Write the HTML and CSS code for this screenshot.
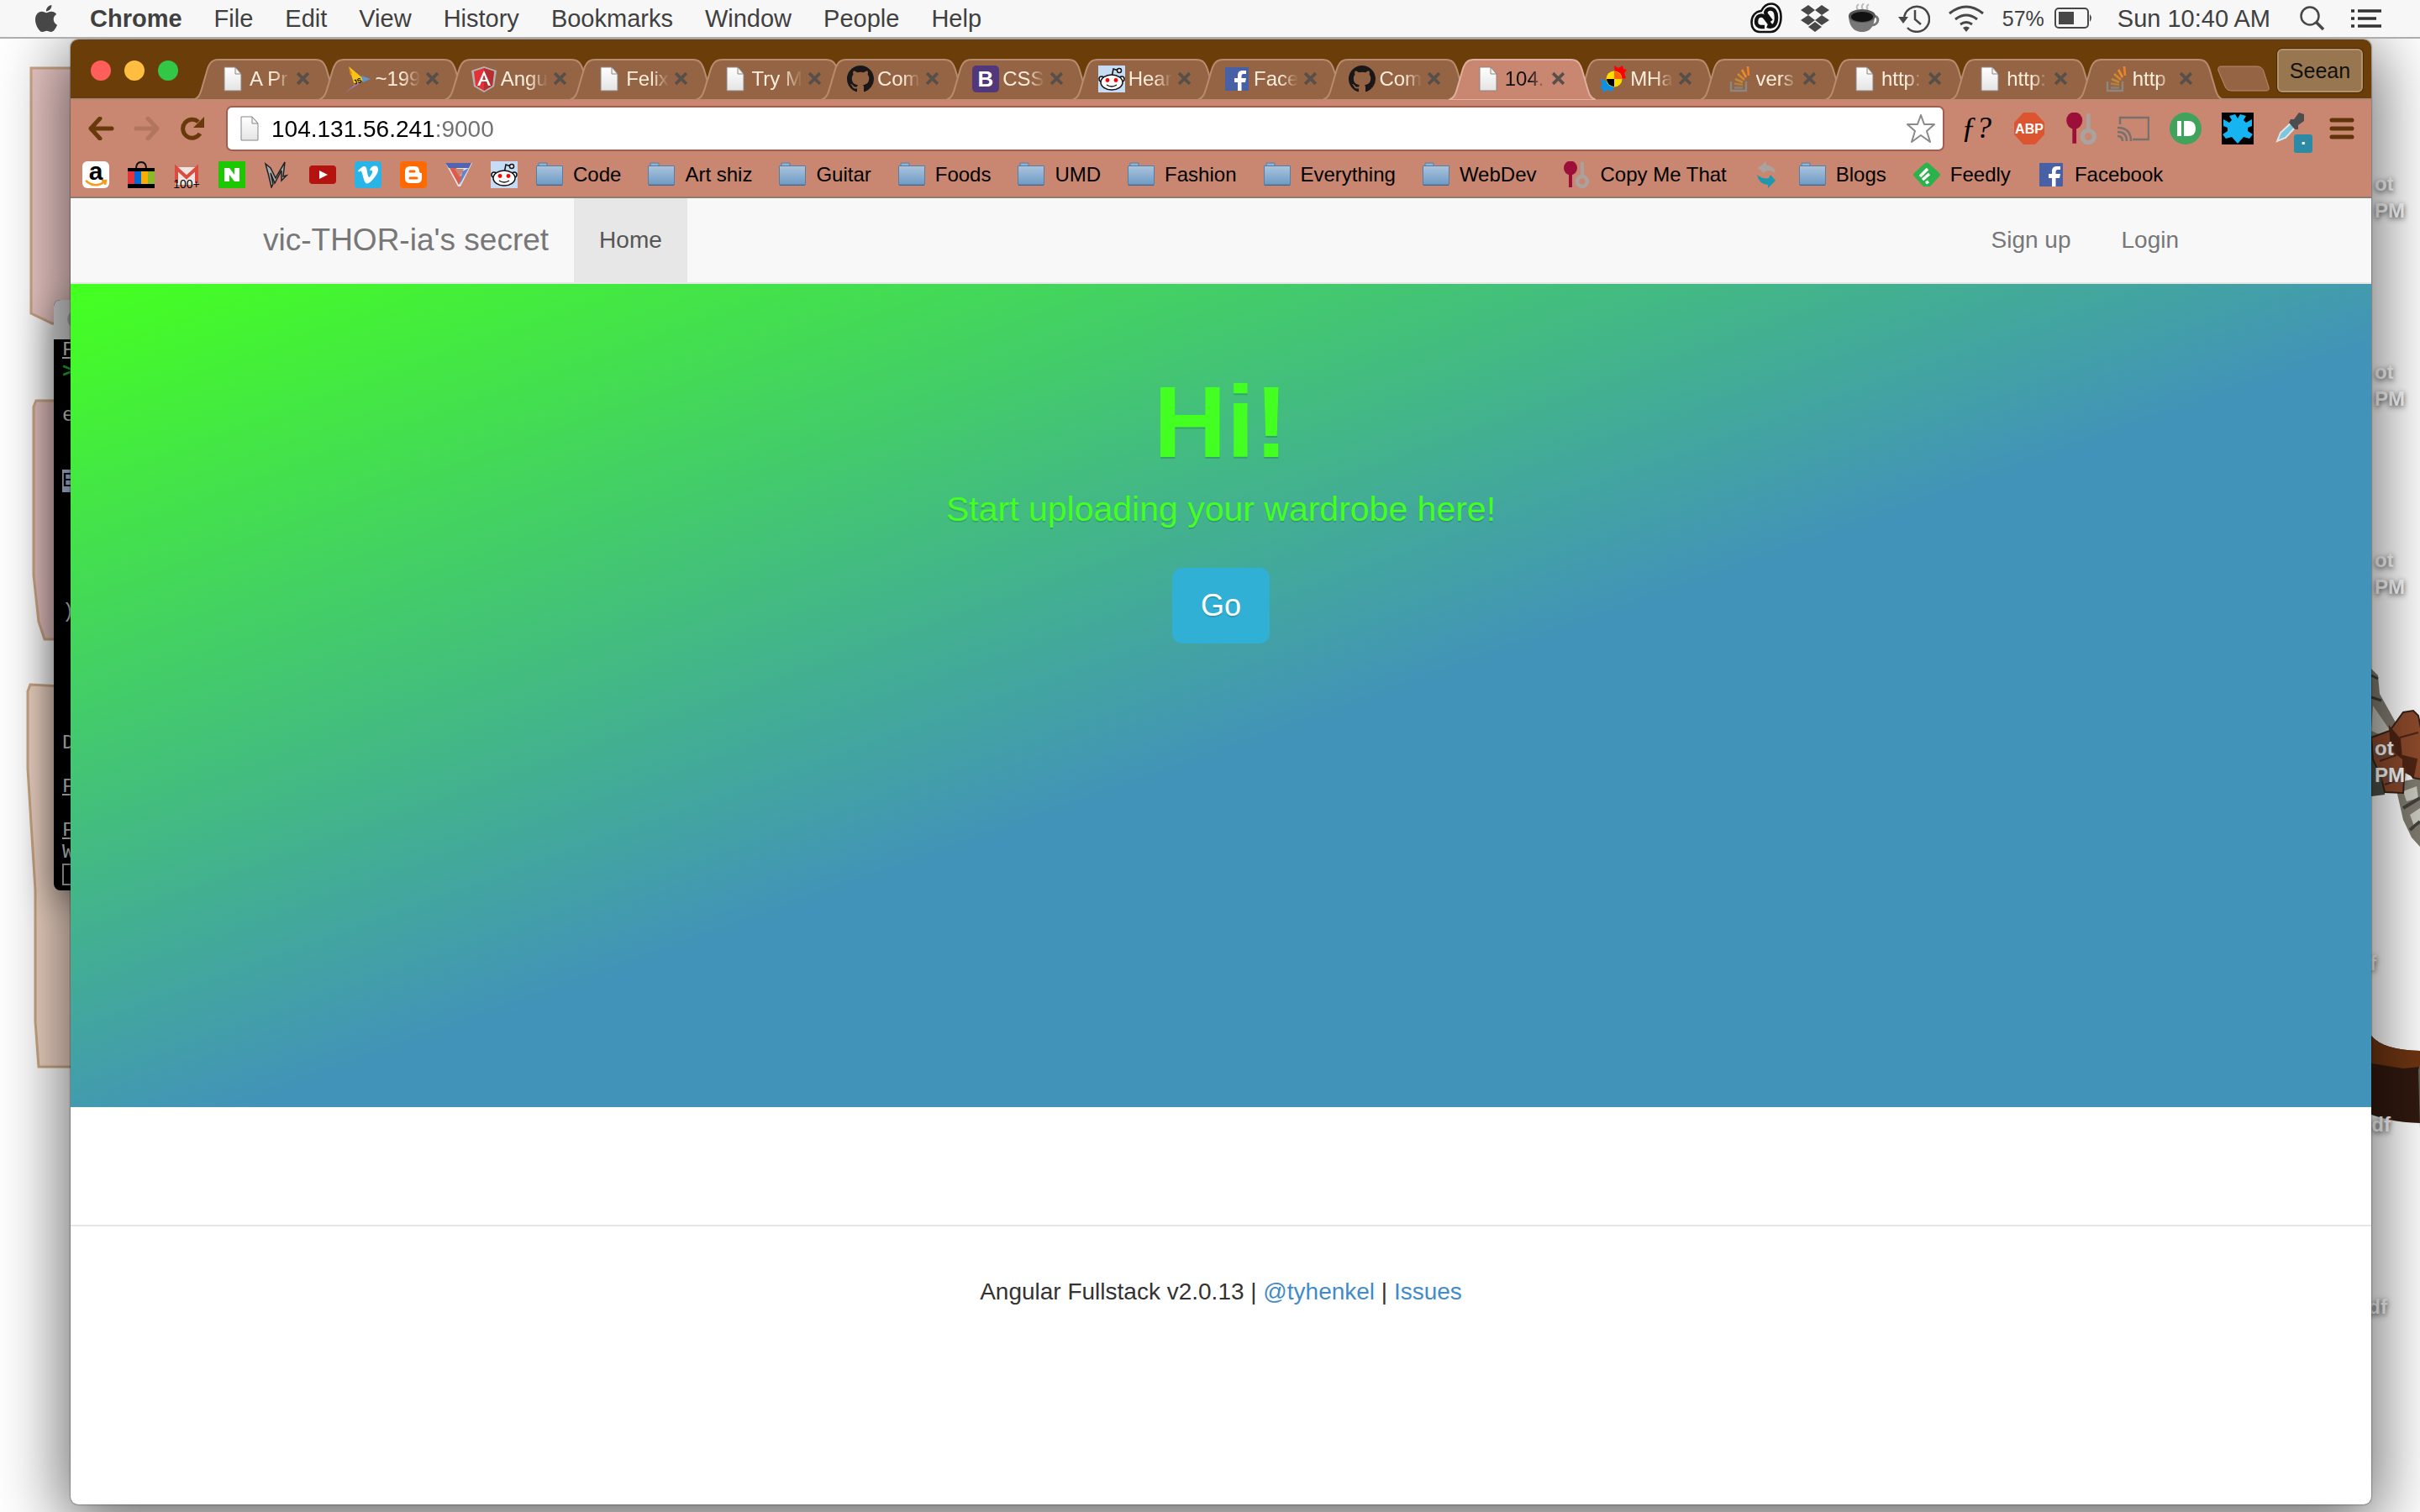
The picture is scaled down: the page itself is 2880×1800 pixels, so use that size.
FILE: index.html
```html
<!DOCTYPE html>
<html lang="en">
    <head>
        <meta charset="utf-8">
        <title>vic-THOR-ia's secret</title>
        <link rel="stylesheet" href="styles.css">
    </head>
    <body>
        <svg class="sprites" width="0" height="0">
            <defs>
                <linearGradient id="paper" x1="0" y1="0" x2="0" y2="1"><stop offset="0" stop-color="#fff"/><stop offset="1" stop-color="#e4e4e4"/></linearGradient>
                <linearGradient id="folder-blue" x1="0" y1="0" x2="0" y2="1"><stop offset="0" stop-color="#abc4dd"/><stop offset="1" stop-color="#6d9ac4"/></linearGradient>
            </defs>
            <symbol id="tab-shape" viewBox="0 0 176 49" preserveAspectRatio="none">
                <path d="M0 49C6 47 8 43 10 36L17 12C20 4 23 1 30 1H146C153 1 156 4 159 12L166 36C168 43 170 47 176 49Z"/>
            </symbol>
            <symbol id="doc" viewBox="0 0 32 32">
                <path d="M6 2H19L26 10V30H6Z" fill="url(#paper)" stroke="#8d8580"/><path d="M19 2V10H26Z" fill="#f4f4f4" stroke="#8d8580"/>
            </symbol>
            <symbol id="close" viewBox="0 0 16 16"><path d="M2 2L14 14M14 2L2 14" stroke="#57504a" stroke-width="3.4"/></symbol>
            <symbol id="bird" viewBox="0 0 32 32">
                <path d="M5 1L24 17L12 24Z" fill="#f7c516"/><path d="M5 1L9 9L7 12Z" fill="#e88b17"/><path d="M20 12L31 16L22 20Z" fill="#5f93d2"/><path d="M12 23L22 19L1 32Z" fill="#9a7bc0"/>
                <text x="11" y="22" class="tiny-js" transform="rotate(-20 14 20)">JS</text>
            </symbol>
            <symbol id="angular" viewBox="0 0 32 32">
                <path d="M16 1L31 6L28 25L16 32L4 25L1 6Z" fill="#b3b3b3"/><path d="M16 3L28 7L26 24L16 30L6 24L4 7Z" fill="#e23237"/><path d="M16 3L28 7L26 24L16 30Z" fill="#b52e31"/>
                <path d="M16 6L24 24H21L19 19H13L11 24H8ZM16 11L14 17H18Z" fill="#fff" fill-rule="evenodd"/>
            </symbol>
            <symbol id="github" viewBox="0 0 16 16">
                <path fill="#191717" d="M8 0C3.58 0 0 3.58 0 8c0 3.54 2.29 6.53 5.47 7.59.4.07.55-.17.55-.38 0-.19-.01-.82-.01-1.49-2.01.37-2.53-.49-2.69-.94-.09-.23-.48-.94-.82-1.13-.28-.15-.68-.52-.01-.53.63-.01 1.08.58 1.23.82.72 1.21 1.87.87 2.33.66.07-.52.28-.87.51-1.07-1.78-.2-3.64-.89-3.64-3.95 0-.87.31-1.59.82-2.15-.08-.2-.36-1.02.08-2.12 0 0 .67-.21 2.2.82.64-.18 1.32-.27 2-.27.68 0 1.36.09 2 .27 1.53-1.04 2.2-.82 2.2-.82.44 1.1.16 1.92.08 2.12.51.56.82 1.27.82 2.15 0 3.07-1.87 3.75-3.65 3.95.29.25.54.73.54 1.48 0 1.07-.01 1.93-.01 2.2 0 .21.15.46.55.38A8.013 8.013 0 0016 8c0-4.42-3.58-8-8-8z"/>
            </symbol>
            <symbol id="bootstrap" viewBox="0 0 32 32"><rect width="32" height="32" rx="5" fill="#51377b"/><text x="16" y="25" class="letter-b">B</text></symbol>
            <symbol id="reddit" viewBox="0 0 32 32">
                <rect width="32" height="32" fill="#c5dcf4"/><path d="M16 14L18 4L24 6" fill="none" stroke="#111" stroke-width="1.5"/>
                <g fill="#fff" stroke="#111" stroke-width="1.5"><circle cx="25" cy="6" r="2.5"/><circle cx="4" cy="16" r="3"/><circle cx="28" cy="16" r="3"/><ellipse cx="16" cy="20" rx="13" ry="9"/></g>
                <circle cx="11" cy="17.500" r="2.400" fill="#f00"/><circle cx="21" cy="17.500" r="2.400" fill="#f00"/><path d="M10 23Q16 27 22 23" fill="none" stroke="#111" stroke-width="1.500"/>
            </symbol>
            <symbol id="facebook" viewBox="0 0 32 32"><rect x="2" y="2" width="28" height="28" rx="1" fill="#4860a5"/><path d="M17 30V20H13V15H17V12C17 8 19 6 23 6H27V10H24C22 10 21.500 11 21.500 13V15H27L26 20H21.500V30Z" fill="#fff"/></symbol>
            <symbol id="mha" viewBox="0 0 32 32">
                <path d="M17 0L22 3L27 0L28 4L32 5L29 9L31 15L25 16L18 12Z" fill="#f00"/><path d="M0 16L6 18L14 22L17 27L14 31L9 29L4 32L3 27L0 27L3 22Z" fill="#0b92e6"/>
                <circle cx="17" cy="16" r="9.500" fill="#fd0"/><path d="M17 7A9 9 0 0 1 26 16H17Z" fill="#f60"/><path d="M8 16H17V25A9 9 0 0 1 8 16Z" fill="#000"/>
            </symbol>
            <symbol id="overflow" viewBox="0 0 32 32">
                <path d="M6 19V30H24V19" fill="none" stroke="#8a8784" stroke-width="2.400"/><path d="M10 26.500H20" stroke="#8a8078" stroke-width="2.600"/><path d="M10 21.500L20 23" stroke="#b0803f" stroke-width="2.600"/><path d="M11 16L20 20" stroke="#bd8a3c" stroke-width="2.600"/><path d="M14 10L22 17" stroke="#d48a2c" stroke-width="2.600"/><path d="M19 5L24 14" stroke="#ef8a25" stroke-width="2.600"/><path d="M26 1L27 12" stroke="#f48024" stroke-width="2.600"/>
            </symbol>
            <symbol id="folder" viewBox="0 0 32 32"><path d="M3 6V2H13V6" fill="#92b1cf" stroke="#557ea5"/><path d="M0.500 5.500H31.500V28H0.500Z" fill="url(#folder-blue)" stroke="#557ea5"/><path d="M1 28.500H31" stroke="#41688e" stroke-width="1"/></symbol>
            <symbol id="spoons" viewBox="0 0 32 32"><ellipse cx="9" cy="8" rx="8" ry="8.500" fill="#9b0f38"/><path d="M9 12V31" stroke="#9b0f38" stroke-width="4"/><path d="M23 1V18" stroke="#aaa19c" stroke-width="4"/><ellipse cx="23" cy="24" rx="6" ry="6" fill="none" stroke="#a9a29e" stroke-width="4.500"/></symbol>
        </svg>

        <header class="menubar">
            <button class="apple" aria-label="Apple menu"><svg width="28" height="32" viewBox="2 0 20 24" fill="#474747"><path d="M12.152 6.896c-.948 0-2.415-1.078-3.96-1.04-2.04.027-3.91 1.183-4.961 3.014-2.117 3.675-.546 9.103 1.519 12.09 1.013 1.454 2.208 3.09 3.792 3.039 1.52-.065 2.09-.987 3.935-.987 1.831 0 2.35.987 3.96.948 1.637-.026 2.676-1.48 3.676-2.948 1.156-1.688 1.636-3.325 1.662-3.415-.039-.013-3.182-1.221-3.22-4.857-.026-3.04 2.48-4.494 2.597-4.559-1.429-2.09-3.623-2.324-4.39-2.376-2-.156-3.675 1.09-4.61 1.09zM15.53 3.83c.843-1.012 1.4-2.427 1.245-3.83-1.207.052-2.662.805-3.532 1.818-.78.896-1.454 2.338-1.273 3.714 1.338.104 2.715-.688 3.559-1.701"/></svg></button>
            <button class="app-name">Chrome</button>
            <button>File</button>
            <button>Edit</button>
            <button>View</button>
            <button>History</button>
            <button>Bookmarks</button>
            <button>Window</button>
            <button>People</button>
            <button>Help</button>
            <div class="status">
                <svg width="38" height="38" viewBox="0 0 38 38" fill="none" stroke="#111"><path d="M11 35C5 35 1.500 30 1.500 24C1.500 16 6 11 13 10C16 4 20 1.500 25 1.500C32 1.500 36.500 8 36.500 17C36.500 27 32 35 24 35Z" stroke-width="2.600"/><path d="M17 29H13C9 29 7 26 7 23C7 18 10 15.500 13 15.500C16 15.500 17 17 19 20L25 28" stroke-width="4.500"/><path d="M20 28C28 31 31 25 31 18C31 11 28 7.500 24 7.500C20 7.500 17 11 19 14L25 22" stroke-width="4.500"/></svg>
                <svg width="34" height="32" viewBox="0 0 34 32" fill="#474747"><path d="M9 0L17 6L9 12L0 6ZM25 0L34 6L25 12L17 6ZM9 12L17 18L9 24L0 18ZM25 12L34 18L25 24L17 18ZM17 20L25 26L17 32L9 26Z"/></svg>
                <svg width="38" height="36" viewBox="0 0 38 36"><path d="M12 7Q9 4 13 1M18 7Q15 4 19 0M24 7Q21 4 25 1" fill="none" stroke="#bbb" stroke-width="2"/><path d="M30 15C38 14 38 26 28 26" fill="none" stroke="#777" stroke-width="3"/><path d="M1 14C1 24 5 34 17 34S32 24 32 14Z" fill="#777"/><ellipse cx="17" cy="15" rx="16" ry="8" fill="#555"/><ellipse cx="17" cy="16" rx="13" ry="6" fill="#111"/></svg>
                <svg width="38" height="34" viewBox="0 0 38 34" fill="none" stroke="#474747" stroke-width="2.500"><path d="M7 17A15 15 0 1 1 11 28"/><path d="M0 15H12L6 23Z" fill="#474747" stroke="none"/><path d="M20 7V18L27 24"/></svg>
                <svg width="42" height="32" viewBox="0 0 42 32" fill="none" stroke="#474747" stroke-width="3"><path d="M1 10Q21-6 41 10M8 17Q21 7 34 17M14 23Q21 18 28 23"/><path d="M17 27Q21 24 25 27L21 32Z" fill="#474747" stroke="none"/></svg>
                <span class="battery">57% <svg width="46" height="26" viewBox="0 0 46 26"><rect x="1" y="1" width="39" height="23" rx="4" fill="none" stroke="#474747" stroke-width="2"/><rect x="5" y="5" width="18" height="15" fill="#474747"/><path d="M42 8Q46 12 42 17Z" fill="#474747"/></svg></span>
                <time class="clock">Sun 10:40 AM</time>
                <svg class="search" width="30" height="30" viewBox="0 0 30 30" fill="none" stroke="#474747"><circle cx="12" cy="12" r="10.500" stroke-width="2.500"/><path d="M19 19L28 28" stroke-width="3.500"/></svg>
                <svg class="list" width="36" height="22" viewBox="0 0 36 22" stroke="#333" stroke-width="3.500"><path d="M0 2H4M8 2H36M0 11H4M8 11H30M0 20H4M8 20H36"/></svg>
            </div>
        </header>

        <div class="desktop">
            <!-- wallpaper, left and right edges -->
            <svg class="art-left" width="90" height="1300" viewBox="0 0 90 1300" stroke="#cda886" stroke-width="3">
                <path d="M37 35H90V343L62 339L37 327Z" fill="#ebc9c6"/>
                <path d="M43 431H90V715H53L46 694L40 639V438Z" fill="#e6c3c2"/>
                <path d="M36 769L90 772V1224H46L42 1170V1014L33 869V777Z" fill="#efd5c5"/>
            </svg>
            <svg class="art-right" width="70" height="700" viewBox="0 0 70 700">
                <path d="M10 0L20 10L22 32L50 82L40 120L10 110Z" fill="#817c70"/>
                <path d="M12 10L20 14M12 36L24 40" stroke="#3f3d38" stroke-width="3"/>
                <path d="M14 46L36 78L30 84L12 76Z" fill="#c3c4ba"/>
                <path d="M0 90L28 110L28 152L12 154L0 152Z" fill="#4b5145"/>
                <path d="M40 138L70 132V214L60 203L50 182Z" fill="#817c70"/><path d="M50 148L66 142L68 156L54 160ZM58 176L70 168V186L64 192Z" fill="#cccbc0"/>
                <path d="M50 168L70 156M58 194L70 184" stroke="#44423c" stroke-width="4"/>
                <path d="M12 84L34 76L50 54L62 52L68 58L72 78V134L62 132L52 118L50 150L28 149L24 132L14 110Z" fill="#8f4b2c" stroke="#35221a" stroke-width="2"/>
                <path d="M34 72L46 86L48 108L36 98ZM50 106L66 110L62 130L50 124ZM46 84L68 78M22 112L42 105M28 140L46 134" fill="#502514" stroke="#502514" stroke-width="2"/>
                <path d="M0 426L12 439Q26 456 70 457V543Q30 542 0 528Z" fill="#31190f"/><path d="M0 426L12 439Q26 456 70 457V476L50 478L0 470Z" fill="#6e3512"/><path d="M68 480L70 474V550Z" fill="#62685a"/>
            </svg>
            <div class="labels">
                <p class="label l1">ot<br>PM</p>
                <p class="label l2">ot<br>PM</p>
                <p class="label l3">ot<br>PM</p>
                <p class="label l4">ot<br>PM</p>
                <p class="label l5">f</p>
                <p class="label l6">df</p>
                <p class="label l7">df</p>
            </div>
            <div class="terminal">
                <div class="terminal-bar"><i></i></div>
<pre><u>F</u>
<b>&gt;</b>

e


<mark>E</mark>





)





D

<u>F</u>

<u>F</u>
W
<span class="cursor"></span></pre>
            </div>

            <div class="window">
                <div class="titlebar">
                    <div class="lights"><button class="red" aria-label="Close window"></button><button class="yellow" aria-label="Minimize"></button><button class="green" aria-label="Zoom"></button></div>
                    <div class="tabs">
                        <div class="tab"><svg class="shape"><use href="#tab-shape"/></svg><div class="tab-in"><svg class="ico"><use href="#doc"/></svg><span>A Pr</span><button aria-label="Close tab"><svg><use href="#close"/></svg></button></div></div>
                        <div class="tab"><svg class="shape"><use href="#tab-shape"/></svg><div class="tab-in"><svg class="ico"><use href="#bird"/></svg><span>~199</span><button aria-label="Close tab"><svg><use href="#close"/></svg></button></div></div>
                        <div class="tab"><svg class="shape"><use href="#tab-shape"/></svg><div class="tab-in"><svg class="ico"><use href="#angular"/></svg><span>Angu</span><button aria-label="Close tab"><svg><use href="#close"/></svg></button></div></div>
                        <div class="tab"><svg class="shape"><use href="#tab-shape"/></svg><div class="tab-in"><svg class="ico"><use href="#doc"/></svg><span>Felix</span><button aria-label="Close tab"><svg><use href="#close"/></svg></button></div></div>
                        <div class="tab"><svg class="shape"><use href="#tab-shape"/></svg><div class="tab-in"><svg class="ico"><use href="#doc"/></svg><span>Try M</span><button aria-label="Close tab"><svg><use href="#close"/></svg></button></div></div>
                        <div class="tab"><svg class="shape"><use href="#tab-shape"/></svg><div class="tab-in"><svg class="ico"><use href="#github"/></svg><span>Com</span><button aria-label="Close tab"><svg><use href="#close"/></svg></button></div></div>
                        <div class="tab"><svg class="shape"><use href="#tab-shape"/></svg><div class="tab-in"><svg class="ico"><use href="#bootstrap"/></svg><span>CSS</span><button aria-label="Close tab"><svg><use href="#close"/></svg></button></div></div>
                        <div class="tab"><svg class="shape"><use href="#tab-shape"/></svg><div class="tab-in"><svg class="ico"><use href="#reddit"/></svg><span>Hear</span><button aria-label="Close tab"><svg><use href="#close"/></svg></button></div></div>
                        <div class="tab"><svg class="shape"><use href="#tab-shape"/></svg><div class="tab-in"><svg class="ico"><use href="#facebook"/></svg><span>Face</span><button aria-label="Close tab"><svg><use href="#close"/></svg></button></div></div>
                        <div class="tab"><svg class="shape"><use href="#tab-shape"/></svg><div class="tab-in"><svg class="ico"><use href="#github"/></svg><span>Com</span><button aria-label="Close tab"><svg><use href="#close"/></svg></button></div></div>
                        <div class="tab active"><svg class="shape"><use href="#tab-shape"/></svg><div class="tab-in"><svg class="ico"><use href="#doc"/></svg><span>104.</span><button aria-label="Close tab"><svg><use href="#close"/></svg></button></div></div>
                        <div class="tab"><svg class="shape"><use href="#tab-shape"/></svg><div class="tab-in"><svg class="ico"><use href="#mha"/></svg><span>MHa</span><button aria-label="Close tab"><svg><use href="#close"/></svg></button></div></div>
                        <div class="tab"><svg class="shape"><use href="#tab-shape"/></svg><div class="tab-in"><svg class="ico"><use href="#overflow"/></svg><span>vers</span><button aria-label="Close tab"><svg><use href="#close"/></svg></button></div></div>
                        <div class="tab"><svg class="shape"><use href="#tab-shape"/></svg><div class="tab-in"><svg class="ico"><use href="#doc"/></svg><span>http:</span><button aria-label="Close tab"><svg><use href="#close"/></svg></button></div></div>
                        <div class="tab"><svg class="shape"><use href="#tab-shape"/></svg><div class="tab-in"><svg class="ico"><use href="#doc"/></svg><span>http:</span><button aria-label="Close tab"><svg><use href="#close"/></svg></button></div></div>
                        <div class="tab"><svg class="shape"><use href="#tab-shape"/></svg><div class="tab-in"><svg class="ico"><use href="#overflow"/></svg><span>http</span><button aria-label="Close tab"><svg><use href="#close"/></svg></button></div></div>
                    </div>
                    <button class="new-tab" aria-label="New tab"><svg width="64" height="32" viewBox="0 0 64 32"><path d="M5 1H48Q54 1 56 7L62 26Q63 30 59 30H18Q12 30 10 25L2 6Q1 1 5 1Z" fill="#956444" stroke="#b98c6f"/></svg></button>
                    <button class="profile">Seean</button>
                </div>

                <div class="toolbar">
                    <button class="nav-btn" aria-label="Back"><svg width="32" height="28" viewBox="0 0 32 28" fill="none" stroke="#68390a" stroke-width="5"><path d="M29 14H5M15 2L4 14L15 26" stroke-linecap="round" stroke-linejoin="round"/></svg></button>
                    <button class="nav-btn" aria-label="Forward"><svg width="32" height="28" viewBox="0 0 32 28" fill="none" stroke="#b17560" stroke-width="5"><path d="M3 14H27M17 2L28 14L17 26" stroke-linecap="round" stroke-linejoin="round"/></svg></button>
                    <button class="nav-btn" aria-label="Reload"><svg width="32" height="28" viewBox="0 0 32 28" fill="none" stroke="#68390a" stroke-width="5"><path d="M24 20A11 11 0 1 1 22 6"/><path d="M29 0V13H16Z" fill="#68390a" stroke="none"/></svg></button>
                    <div class="omnibox">
                        <svg class="ico"><use href="#doc"/></svg>
                        <input type="text" aria-label="Address" value="104.131.56.241:9000">
                        <svg width="36" height="36" viewBox="0 0 36 36" fill="none" stroke="#8a8a8a" stroke-width="2" stroke-linejoin="round"><path d="M18 2L22 13H34L25 21L29 34L18 26L7 34L11 21L2 13H14Z"/></svg>
                    </div>
                    <div class="extensions">
                        <svg width="38" height="38" viewBox="0 0 38 38"><text x="18" y="30" class="letter-f">ƒ?</text></svg>
                        <svg width="38" height="38" viewBox="0 0 38 38"><path d="M12 0H26L37 12V26L26 38H12L1 26V12Z" fill="#dc5430"/><text x="19" y="25" class="letter-abp">ABP</text></svg>
                        <svg width="38" height="38"><use href="#spoons"/></svg>
                        <svg width="38" height="38" viewBox="0 0 38 38" fill="none" stroke="#77706c" stroke-width="2.500"><path d="M3 14V6H37V32H18"/><path d="M0 28Q6 28 6 34M0 23Q11 23 11 34M0 18Q16 18 16 34"/></svg>
                        <svg width="38" height="38" viewBox="0 0 38 38"><circle cx="19" cy="19" r="19" fill="#3fa35b"/><path d="M9 10H14V28H9ZM17 10H22Q31 10 31 19T22 28H17Z" fill="#fff"/></svg>
                        <svg width="38" height="38" viewBox="0 0 38 38"><path d="M0 0H38V38H0Z"/><path d="M19 7L22 2L29 4L26 9L29 12L36 8V16L31 18V22L37 26L33 31L26 29L19 37L12 29L5 31L1 26L7 22V18L2 16V8L9 12L12 9L9 4L16 2Z" fill="#16b4f0"/></svg>
                        <span class="dropper"><svg width="38" height="38" viewBox="0 0 38 38"><path d="M4 34L8 24L22 11L27 16L14 30Z" fill="#7cc7dd" stroke="#e0e5e6" stroke-width="2"/><path d="M20 8L24 8L30 0L36 2V10L29 15V20L25 20L18 12Z" fill="#4d4d4f"/></svg><i>▪</i></span>
                        <button class="menu-btn" aria-label="Menu"><svg width="30" height="28" viewBox="0 0 30 28" stroke="#5f3409" stroke-width="5" stroke-linecap="round"><path d="M3 4H27M3 14H27M3 24H27"/></svg></button>
                    </div>
                </div>

                <nav class="bookmarks">
                    <a href="#" aria-label="Amazon"><svg class="ico" viewBox="0 0 32 32"><rect width="32" height="32" rx="6" fill="#fff"/><text x="16" y="22" class="letter-a">a</text><path d="M4 23Q15 33 27 24M23 23H28L27 28" fill="none" stroke="#f79b1b" stroke-width="2.500"/></svg></a>
                    <a href="#" aria-label="Shop"><svg class="ico" viewBox="0 0 32 32"><path d="M10 9Q10 1 16 1T22 9" fill="none" stroke="#111" stroke-width="2"/><path d="M0 8H32V32H0Z"/><path d="M0 12H8V27H0Z" fill="#e5343c"/><path d="M8 12H16V27H8Z" fill="#0568d8"/><path d="M16 12H24V27H16Z" fill="#f9ae05"/><path d="M24 12H32V27H24Z" fill="#8ab92b"/></svg></a>
                    <a href="#" aria-label="Gmail"><svg class="ico" viewBox="0 0 32 32"><path d="M3 7H29V28H3Z" fill="#eee6e2"/><path d="M4 26V8L16 19L28 8V26" fill="none" stroke="#dc4b3e" stroke-width="4"/><text x="16" y="32" class="letter-100">100+</text></svg></a>
                    <a href="#" aria-label="N"><svg class="ico" viewBox="0 0 32 32"><rect width="32" height="32" rx="1" fill="#1ec800"/><path d="M7 24V8H13L19 16V8H25V24H19L13 16V24Z" fill="#fff"/></svg></a>
                    <a href="#" aria-label="M"><svg class="ico" viewBox="0 0 32 32"><path d="M2 3L8 8L14 20L25 1L23 18L27 17L21 23L21 11L13 26L8 14L11 27L9 31L6 18Z" fill="#aaa" stroke="#222" stroke-width="1.500"/></svg></a>
                    <a href="#" aria-label="YouTube"><svg class="ico" viewBox="0 0 32 32"><rect y="5" width="32" height="22" rx="4" fill="#b5130f"/><path d="M12 11L22 16L12 21Z" fill="#fff"/></svg></a>
                    <a href="#" aria-label="Vimeo"><svg class="ico" viewBox="0 0 32 32"><rect width="32" height="32" rx="4" fill="#28b4e6"/><path transform="translate(4 4)" fill="#fff" d="M23.977 6.416c-.105 2.338-1.739 5.543-4.894 9.609-3.268 4.247-6.026 6.37-8.29 6.37-1.409 0-2.578-1.294-3.553-3.881L5.322 11.4C4.603 8.816 3.834 7.522 3.01 7.522c-.179 0-.806.378-1.881 1.132L0 7.197a315.065 315.065 0 003.501-3.128C5.08 2.701 6.266 1.984 7.055 1.91c1.867-.18 3.016 1.1 3.447 3.838.465 2.953.789 4.789.971 5.507.539 2.45 1.131 3.674 1.776 3.674.502 0 1.256-.796 2.265-2.385 1.004-1.589 1.54-2.797 1.612-3.628.144-1.371-.395-2.061-1.614-2.061-.574 0-1.167.121-1.777.391 1.186-3.868 3.434-5.757 6.762-5.637 2.473.06 3.628 1.664 3.493 4.797l-.013.01z"/></svg></a>
                    <a href="#" aria-label="Blogger"><svg class="ico" viewBox="0 0 32 32"><rect width="32" height="32" rx="4" fill="#ff6a00"/><path d="M12 6H18Q23 6 23 12Q23 14 26 14V20Q26 26 20 26H12Q6 26 6 20V12Q6 6 12 6Z" fill="#fff"/><path d="M12 12H17M12 20H20" stroke="#ff6a00" stroke-width="3" stroke-linecap="round"/></svg></a>
                    <a href="#" aria-label="V"><svg class="ico" viewBox="0 0 32 32"><path d="M0 2H32L18 30H15Z" fill="#e5e3e8"/><path d="M0 2H31L28 8H4Z" fill="#5064b0"/><path d="M5 8L16 28L20 20L13 8Z" fill="#e05a48"/><path d="M11 9H22L17 19Z" fill="#c98670"/><path d="M28 8L17 28L20 12Z" fill="#6b82c4"/></svg></a>
                    <a href="#" aria-label="Reddit"><svg class="ico"><use href="#reddit"/></svg></a>
                    <a href="#" class="named"><svg class="ico"><use href="#folder"/></svg>Code</a>
                    <a href="#" class="named"><svg class="ico"><use href="#folder"/></svg>Art shiz</a>
                    <a href="#" class="named"><svg class="ico"><use href="#folder"/></svg>Guitar</a>
                    <a href="#" class="named"><svg class="ico"><use href="#folder"/></svg>Foods</a>
                    <a href="#" class="named"><svg class="ico"><use href="#folder"/></svg>UMD</a>
                    <a href="#" class="named"><svg class="ico"><use href="#folder"/></svg>Fashion</a>
                    <a href="#" class="named"><svg class="ico"><use href="#folder"/></svg>Everything</a>
                    <a href="#" class="named"><svg class="ico"><use href="#folder"/></svg>WebDev</a>
                    <a href="#" class="named"><svg class="ico"><use href="#spoons"/></svg>Copy Me That</a>
                    <a href="#" aria-label="Sync"><svg class="ico" viewBox="0 0 32 32"><path d="M5 8L15 0V4Q25 6 26 14Q19 9 14 12L12 14Z" fill="#a9a29f"/><path d="M4 16Q12 22 18 20L20 16L26 23L17 32V28Q6 27 4 16Z" fill="#1f97ae"/></svg></a>
                    <a href="#" class="named"><svg class="ico"><use href="#folder"/></svg>Blogs</a>
                    <a href="#" class="named"><svg class="ico" viewBox="0 0 32 32"><path d="M13 3Q16 0 19 3L31 14Q33 16 31 18L20 30H12L1 18Q-1 16 1 14Z" fill="#2bb24c"/><path d="M8 18L17 9M11 22L19 15M15 26L18 24" stroke="#fff" stroke-width="3.500"/></svg>Feedly</a>
                    <a href="#" class="named"><svg class="ico"><use href="#facebook"/></svg>Facebook</a>
                </nav>

                <main class="page">
                    <nav class="navbar">
                        <div class="container">
                            <a class="brand" href="#">vic-THOR-ia's secret</a>
                            <a class="nav-link current" href="#">Home</a>
                            <a class="nav-link push" href="#">Sign up</a>
                            <a class="nav-link" href="#">Login</a>
                        </div>
                    </nav>
                    <section class="hero">
                        <h1>Hi!</h1>
                        <p>Start uploading your wardrobe here!</p>
                        <button class="btn-go">Go</button>
                    </section>
                    <footer class="footer">
                        <p>Angular Fullstack v2.0.13 | <a href="#">@tyhenkel</a> | <a href="#">Issues</a></p>
                    </footer>
                </main>
            </div>
        </div>
    </body>
</html>
```
FILE: styles.css
```css
* {
    box-sizing: border-box;
}

body {
    margin: 0;
    height: 100vh;
    display: flex;
    flex-direction: column;
    overflow: hidden;
    background-color: #fff;
    font-family: "Liberation Sans", Arial, sans-serif;
}

button {
    padding: 0;
    border: none;
    background: none;
    font: inherit;
    color: inherit;
    cursor: pointer;
}

svg {
    display: block;
    flex: none;
}

a {
    text-decoration: none;
}

.sprites {
    position: absolute;
}

/* mac menu bar */
.menubar {
    display: flex;
    align-items: center;
    gap: 38px;
    height: 46px;
    padding: 0 46px 0 41px;
    background-color: #f7f7f7;
    border-bottom: 2px solid #adadad;
    color: #404040;
    font-size: 29px;
    position: relative;
    z-index: 3;
}

.app-name {
    font-weight: bold;
}

.status {
    display: flex;
    align-items: center;
    gap: 22px;
    margin-left: auto;
}

.battery {
    display: flex;
    align-items: center;
    gap: 12px;
    font-size: 25px;
}

.clock {
    margin-left: 7px;
}

.search {
    margin-left: 13px;
}

.list {
    margin-left: 9px;
}

/* desktop behind the window */
.desktop {
    flex: 1;
    display: flex;
    position: relative;
    padding: 1px 58px 9px 84px;
    overflow: hidden;
}

.art-left {
    position: absolute;
    left: 0;
    top: 0;
}

.art-right {
    position: absolute;
    right: 0;
    top: 748px;
}

.label {
    position: absolute;
    margin: 0;
    color: #fff;
    font-size: 24px;
    font-weight: bold;
    line-height: 32px;
    text-shadow: 0 2px 6px #555;
}

.l1 { right: 18px; top: 157px; }
.l2 { right: 18px; top: 381px; }
.l3 { right: 18px; top: 605px; }
.l4 { right: 18px; top: 829px; }
.l5 { right: 52px; top: 1085px; }
.l6 { right: 35px; top: 1277px; }
.l7 { right: 39px; top: 1494px; }

.terminal {
    position: absolute;
    left: 64px;
    top: 311px;
    width: 600px;
    height: 703px;
    border-radius: 8px;
    background-color: #000;
    box-shadow: 0 10px 40px rgba(0, 0, 0, 0.4);
    overflow: hidden;
}

.terminal-bar {
    height: 47px;
    padding: 13px 16px;
    background-color: #d0d0d0;
}

.terminal-bar i {
    display: block;
    width: 20px;
    height: 20px;
    border-radius: 50%;
    background-color: #a5a5a5;
}

.terminal pre {
    margin: 0;
    padding-left: 10px;
    color: #ccc;
    font-family: "Liberation Mono", monospace;
    font-size: 24px;
    line-height: 26px;
}

.terminal b {
    color: #1fae2f;
}

.terminal mark {
    background-color: #a9bddf;
    color: #000;
}

.cursor {
    display: block;
    width: 14px;
    height: 26px;
    border: 2px solid #aaa;
}

/* chrome window */
.window {
    flex: 1;
    display: flex;
    flex-direction: column;
    position: relative;
    z-index: 2;
    min-width: 0;
    border-radius: 9px;
    background-color: #fff;
    box-shadow: 0 0 2px rgba(0, 0, 0, 0.8), 0 16px 80px 8px rgba(0, 0, 0, 0.6);
    overflow: hidden;
}

.titlebar {
    display: flex;
    align-items: flex-end;
    height: 72px;
    padding-right: 10px;
    background-color: #6b3e09;
    border-bottom: 2px solid #ad8878;
}

.lights {
    display: flex;
    align-items: center;
    gap: 16px;
    height: 70px;
    padding: 4px 18px 0 24px;
}

.lights button {
    width: 24px;
    height: 24px;
    border-radius: 50%;
}

.red { background-color: #ff5f5a; }
.yellow { background-color: #ffbe3f; }
.green { background-color: #33c748; }

.tabs {
    flex: 1;
    display: flex;
    min-width: 0;
    margin-bottom: -2px;
}

.tab {
    flex: 1;
    display: grid;
    min-width: 0;
    margin-right: -26px;
    color: #fdeedd;
}

.tab:last-child {
    margin-right: 0;
}

.tab > * {
    grid-area: 1 / 1;
}

.shape {
    width: 100%;
    height: 49px;
    fill: #956444;
    stroke: #b98c6f;
    stroke-width: 2px;
}

.tab.active {
    position: relative;
    z-index: 1;
    color: #111;
}

.active .shape {
    fill: #c98670;
    stroke: #dfb09f;
}

.tab-in {
    display: flex;
    align-items: center;
    padding: 0 36px 2px 31px;
    font-size: 24px;
}

.tab-in span {
    flex: 1;
    min-width: 0;
    margin: 0 6px 0 4px;
    overflow: hidden;
    white-space: nowrap;
    mask-image: linear-gradient(90deg, #000 60%, transparent);
}

.tab-in button svg {
    width: 17px;
    height: 17px;
}

.ico {
    width: 32px;
    height: 32px;
}

.new-tab {
    margin: 0 8px 7px -8px;
}

.profile {
    width: 102px;
    height: 52px;
    margin-bottom: 7px;
    border: 2px solid #b3936b;
    border-radius: 6px;
    background-color: #987750;
    box-shadow: 0 0 0 1px #4a2a05;
    color: #111;
    font-size: 25px;
}

.toolbar {
    display: flex;
    align-items: center;
    height: 68px;
    padding: 0 20px;
    background-color: #c98670;
}

.nav-btn {
    margin-right: 23px;
}

.omnibox {
    flex: 1;
    display: flex;
    align-items: center;
    height: 54px;
    padding: 0 8px 0 10px;
    border: 2px solid #a05e50;
    border-radius: 7px;
    background-color: #fff;
}

.omnibox input {
    flex: 1;
    min-width: 0;
    padding: 2px 0 0;
    margin-left: 10px;
    border: none;
    outline: none;
    font: inherit;
    font-size: 28px;
    line-height: 40px;
    /* host in black, port in grey */
    color: transparent;
    background: linear-gradient(90deg, #000 194px, #707070 194px);
    background-clip: text;
    -webkit-background-clip: text;
}

.extensions {
    display: flex;
    align-items: center;
    gap: 24px;
    margin-left: 20px;
}

.menu-btn {
    margin-left: 4px;
}

.dropper {
    position: relative;
}

.dropper i {
    position: absolute;
    right: -8px;
    bottom: -10px;
    width: 22px;
    height: 22px;
    border-radius: 3px;
    background-color: #2d8aa5;
    color: #fff;
    font-size: 12px;
    font-style: normal;
    line-height: 20px;
    text-align: center;
}

.bookmarks {
    display: flex;
    align-items: center;
    gap: 22px;
    height: 49px;
    padding: 0 14px 5px;
    background-color: #c98670;
    border-bottom: 2px solid #8d7a70;
    font-size: 24px;
    white-space: nowrap;
}

.bookmarks a {
    display: flex;
    align-items: center;
    gap: 12px;
    color: #000;
}

.bookmarks .named {
    padding-right: 10px;
}

/* web page */
.page {
    flex: 1;
    font-size: 28px;
    line-height: 40px;
    color: #333;
}

.navbar {
    background-color: #f8f8f8;
    border-bottom: 2px solid #e7e7e7;
}

.container {
    display: flex;
    max-width: 2340px;
    margin: 0 auto;
}

.brand {
    padding: 30px;
    color: #777;
    font-size: 37px;
}

.nav-link {
    padding: 30px;
    color: #777;
}

.current {
    background-color: #e7e7e7;
    color: #555;
}

.push {
    margin-left: auto;
}

.hero {
    padding: 98px 30px 552px;
    background: linear-gradient(to bottom right, #44ff22 1%, #4293b9 54%);
    color: #44ff22;
    text-align: center;
    text-shadow: 0 2px 0 rgba(0, 0, 0, 0.15);
}

.hero h1 {
    margin: 0 0 8px;
    font-size: 120px;
    line-height: 132px;
}

.hero p {
    margin: 0 0 40px;
    font-size: 41px;
    line-height: 60px;
}

.btn-go {
    height: 90px;
    padding: 0 34px;
    border-radius: 12px;
    background-color: #31b0d5;
    color: #fff;
    font-size: 36px;
    text-shadow: inherit;
    vertical-align: top;
}

.footer {
    margin-top: 140px;
    padding: 58px 0;
    border-top: 2px solid #e5e5e5;
    text-align: center;
}

.footer p {
    margin: 0;
}

.footer a {
    color: #428bca;
}

/* lettering inside icons */
.tiny-js {
    font-size: 8px;
    font-weight: bold;
}

.letter-b {
    font-size: 26px;
    font-weight: bold;
    fill: #fff;
    text-anchor: middle;
}

.letter-f {
    font-family: "Liberation Serif", serif;
    font-size: 36px;
    font-style: italic;
    text-anchor: middle;
}

.letter-abp {
    font-size: 16px;
    font-weight: bold;
    fill: #fff;
    text-anchor: middle;
}

.letter-a {
    font-size: 30px;
    font-weight: bold;
    text-anchor: middle;
}

.letter-100 {
    font-size: 14px;
    text-anchor: middle;
}
```
